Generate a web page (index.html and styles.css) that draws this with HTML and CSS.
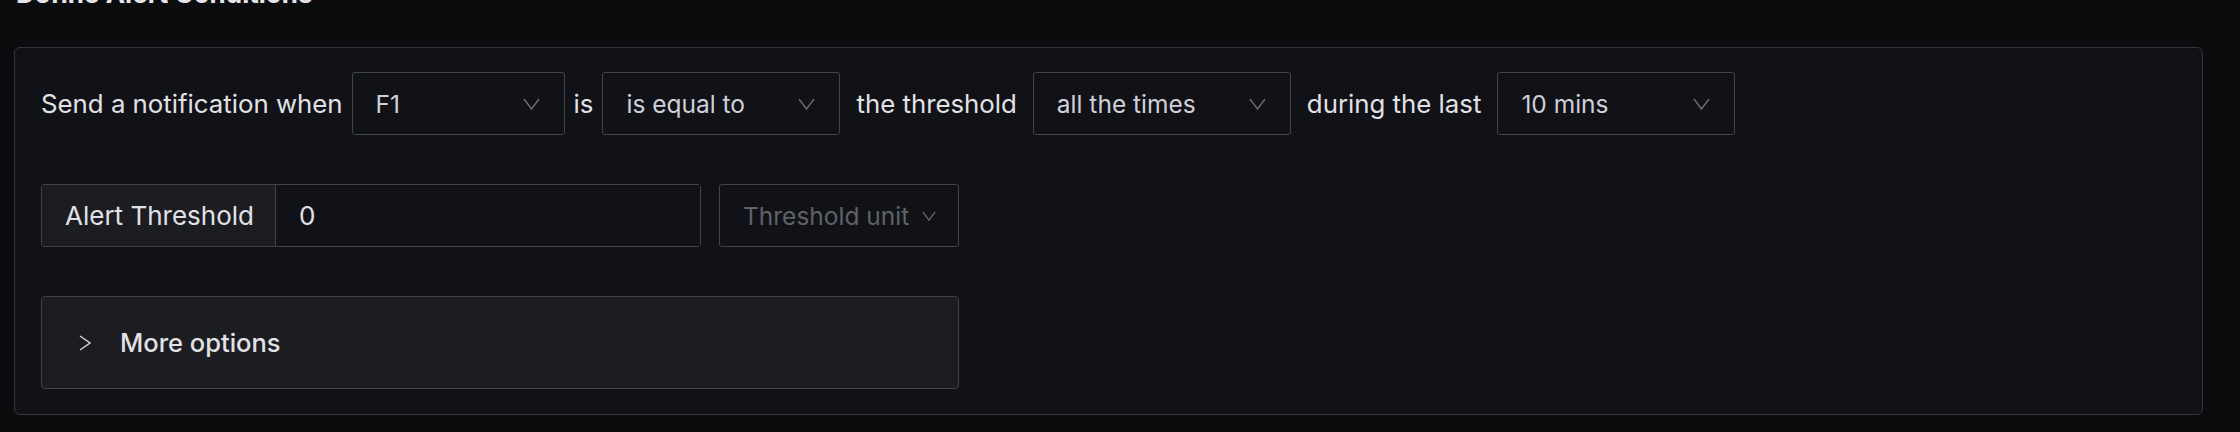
FILE: index.html
```html
<!DOCTYPE html>
<html lang="en">

<head>
  <meta charset="UTF-8">
  <meta name="viewport" content="width=device-width, initial-scale=1.0">
  <title>Define Alert Conditions</title>
  <link rel="stylesheet" href="styles.css">
</head>

<body>
  <div class="page">
    <h2 class="section-title">Define Alert Conditions</h2>
    <div class="conditions">
      <div class="row">
        <span class="label">Send a notification when</span>
        <div class="select w-f1">
          <span class="value">F1</span>
          <svg class="chevron" viewBox="0 0 17 12"><polyline points="1,1 8.5,11 16,1" /></svg>
        </div>
        <span class="label">is</span>
        <div class="select w-op">
          <span class="value">is equal to</span>
          <svg class="chevron" viewBox="0 0 17 12"><polyline points="1,1 8.5,11 16,1" /></svg>
        </div>
        <span class="label spaced">the threshold</span>
        <div class="select w-times">
          <span class="value">all the times</span>
          <svg class="chevron" viewBox="0 0 17 12"><polyline points="1,1 8.5,11 16,1" /></svg>
        </div>
        <span class="label spaced">during the last</span>
        <div class="select w-op">
          <span class="value">10 mins</span>
          <svg class="chevron" viewBox="0 0 17 12"><polyline points="1,1 8.5,11 16,1" /></svg>
        </div>
      </div>

      <div class="row row-threshold">
        <div class="input-group">
          <span class="addon">Alert Threshold</span>
          <input class="input" type="text" value="0">
        </div>
        <div class="select w-unit">
          <span class="value placeholder">Threshold unit</span>
          <svg class="chevron small" viewBox="0 0 17 12"><polyline points="1,1 8.5,11 16,1" /></svg>
        </div>
      </div>

      <div class="more-options">
        <svg class="caret" viewBox="0 0 12 16"><polyline points="1,1 11,8 1,15" /></svg>
        <span>More options</span>
      </div>
    </div>
  </div>
</body>

</html>
```

FILE: styles.css
```css
body {
  margin: 0;
  padding: 0;
  background-color: #0b0c0e;
  font-family: Inter, "Noto Sans", sans-serif;
  color: #d8d9dc;
  overflow: hidden;
}

.page {
  padding: 0 37px 0 14px;
}

.section-title {
  margin: -19px 0 0 2px;
  height: 26px;
  font-size: 26px;
  line-height: 26px;
  font-weight: 700;
  color: #e6e6ea;
}

.conditions {
  margin-top: 40px;
  padding: 24px 25px 25px 26px;
  background-color: #111217;
  border: 1px solid #33363c;
  border-radius: 6px;
  display: flex;
  flex-direction: column;
  gap: 49px;
}

.row {
  display: flex;
  align-items: center;
  gap: 9px;
}

.row-threshold {
  gap: 18px;
}

.label {
  font-size: 25.8px;
  color: #e2e2e6;
  white-space: nowrap;
}

.label.spaced {
  padding: 0 7px;
}

.select {
  box-sizing: border-box;
  height: 63px;
  padding: 0 24px 0 23px;
  display: flex;
  align-items: center;
  justify-content: space-between;
  border: 1px solid #41444a;
  border-radius: 3px;
  background-color: #111217;
}

.w-f1 {
  width: 213px;
}

.w-op {
  width: 238px;
}

.w-times {
  width: 258px;
}

.w-unit {
  width: 240px;
  padding-right: 22px;
}

.value {
  font-size: 24.5px;
  color: #cfd0d8;
  white-space: nowrap;
}

.placeholder {
  color: #5f6269;
}

.chevron {
  width: 17px;
  height: 12px;
  fill: none;
  stroke: #6b6e75;
  stroke-width: 1.4;
}

.chevron.small {
  width: 14px;
  height: 10px;
}

.input-group {
  display: flex;
  height: 63px;
  box-sizing: border-box;
  border: 1px solid #41444a;
  border-radius: 3px;
}

.addon {
  width: 234px;
  box-sizing: border-box;
  padding-left: 23px;
  display: flex;
  align-items: center;
  font-size: 26px;
  color: #e2e2e6;
  background-color: #1c1d22;
  border-right: 1px solid #41444a;
}

.input {
  width: 424px;
  box-sizing: border-box;
  padding: 0 23px;
  border: none;
  outline: none;
  background-color: #111217;
  font-family: inherit;
  font-size: 26px;
  color: #e2e2e6;
}

.more-options {
  box-sizing: border-box;
  width: 918px;
  height: 93px;
  padding-left: 37px;
  display: flex;
  align-items: center;
  gap: 29px;
  background-color: #1c1d22;
  border: 1px solid #41444a;
  border-radius: 4px;
  font-size: 25.5px;
  font-weight: 500;
  color: #e2e2e6;
}

.caret {
  width: 12px;
  height: 16px;
  fill: none;
  stroke: #d0d1d6;
  stroke-width: 1.5;
}
```
